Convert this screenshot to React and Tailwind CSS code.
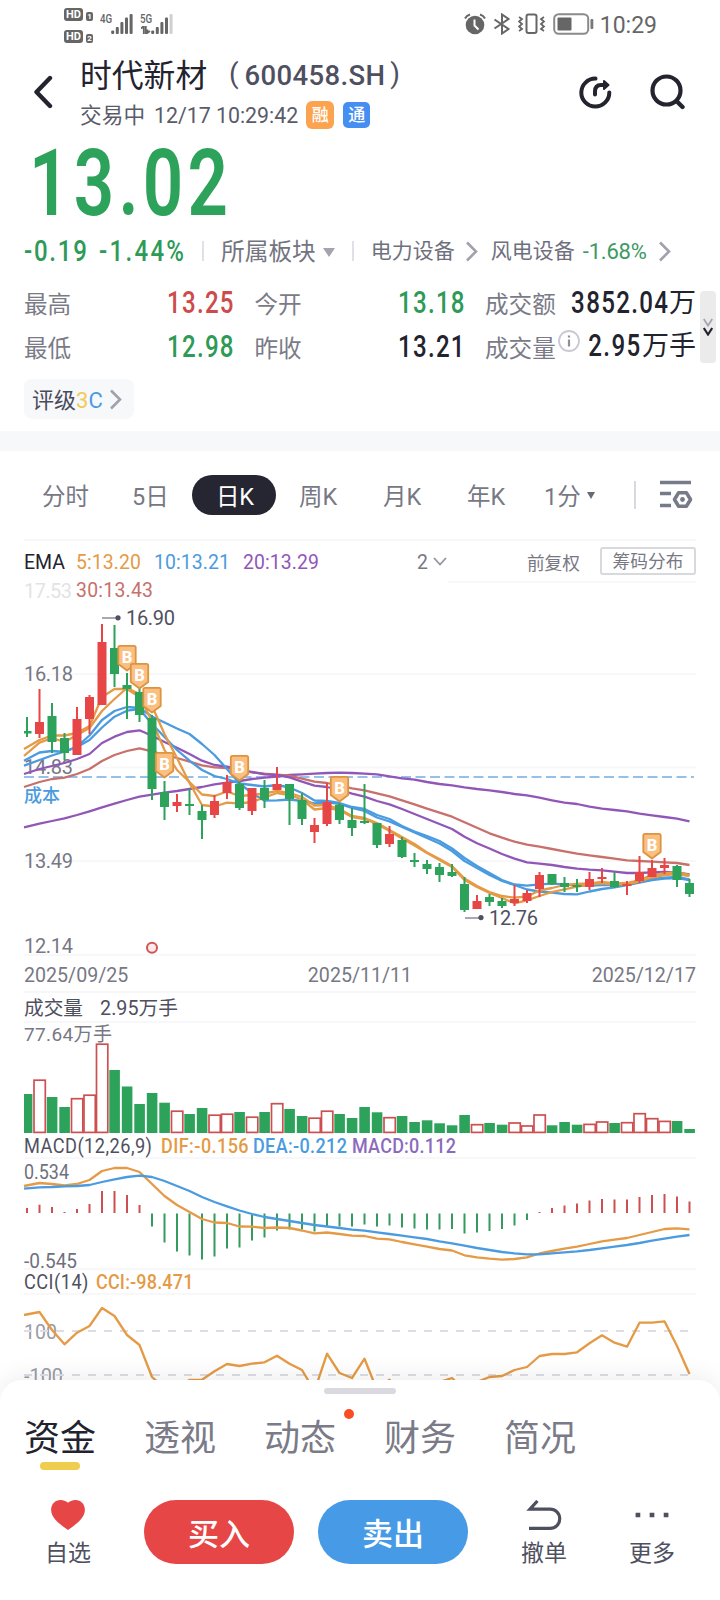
import React from "react";

const RED = "#e64646";
const GREEN = "#2da25b";
const ORANGE = "#e59a45";
const BLUE = "#4a9be0";
const PURPLE = "#9157b8";
const ROSE = "#c7706c";

const STEP = 12.5;
const candleX = (index) => 27 + index * STEP;

// [direction, body top, body bottom, wick top, wick bottom]
const candles = [
  ["g", 731, 733.5, 717, 737],
  ["r", 722, 734, 689, 738],
  ["g", 716, 742, 703, 753],
  ["g", 738, 753, 733, 760],
  ["r", 719, 755, 707, 755],
  ["r", 697, 719, 695, 734],
  ["r", 642, 705, 624, 705],
  ["g", 648, 674, 625, 687],
  ["g", 685, 689, 673, 719],
  ["g", 692, 715, 687, 722],
  ["g", 718, 789, 715, 800],
  ["g", 792, 807, 781, 820],
  ["r", 802, 806, 794, 812],
  ["g", 804, 806, 789, 815],
  ["g", 811, 820, 805, 839],
  ["r", 801, 815, 795, 818],
  ["r", 782, 793, 775, 799],
  ["g", 784, 808, 780, 810],
  ["r", 788, 811, 788, 815],
  ["g", 788, 800, 780, 808],
  ["r", 784, 790, 767, 790],
  ["g", 784, 799, 784, 825],
  ["g", 800, 819, 793, 825],
  ["r", 825, 832, 818, 843],
  ["r", 802, 824, 783, 826],
  ["g", 805, 820, 803, 824],
  ["g", 820, 828, 808, 836],
  ["g", 821, 823, 784, 824],
  ["g", 823, 845, 823, 848],
  ["r", 834, 844, 826, 847],
  ["g", 840, 857, 837, 858],
  ["g", 860, 862, 853, 867],
  ["g", 864, 869, 860, 874],
  ["g", 867, 875, 863, 882],
  ["g", 872, 876, 864, 877],
  ["g", 884, 910, 877, 912],
  ["r", 901, 909, 895, 909],
  ["g", 897, 902, 894, 906],
  ["g", 901, 906, 898, 908],
  ["r", 899, 903, 885, 906],
  ["r", 893, 901, 890, 903],
  ["r", 875, 889, 872, 897],
  ["g", 874, 884, 874, 885],
  ["g", 883, 887, 877, 892],
  ["g", 885, 887, 879, 892],
  ["r", 879, 887, 872, 890],
  ["r", 877, 879, 868, 883],
  ["g", 881, 887, 872, 888],
  ["r", 884, 886, 881, 895],
  ["r", 872, 881, 856, 883],
  ["r", 868, 877, 860, 877],
  ["r", 865, 868, 858, 874],
  ["g", 866, 880, 865, 887],
  ["g", 883, 894, 879, 897],
];

const averages = [
  {
    color: PURPLE,
    values: [827.3, 823.7, 821, 818.3, 815, 811.3, 807.3, 803.7, 800, 796.7, 794.7, 792.7, 791, 789, 787, 784.3, 782.7, 781, 779, 777.7, 776.5, 775, 774.3, 773.7, 773, 772.7, 773, 773.7, 774.3, 776.3, 778.3, 779.7, 782, 784, 785.3, 787.3, 789, 790.3, 792, 794, 795.3, 797.7, 800.3, 802.7, 804, 806.7, 808.7, 810, 811.3, 813.7, 815.3, 817, 818.7, 821.3],
  },
  {
    color: ROSE,
    values: [787, 782, 779, 777.7, 774, 769, 761, 755, 751, 748.3, 751.3, 755, 758, 761.7, 765.3, 767.3, 768, 770, 772.3, 773.7, 774.7, 775.7, 778.7, 781.7, 783, 785.7, 788.3, 790.3, 793.3, 796.3, 800.3, 804.3, 808.7, 812.7, 816.7, 822.3, 827.7, 833.3, 837.7, 841.7, 844.7, 846.7, 849, 851.3, 853.7, 855.3, 857, 858.7, 860.3, 861, 861.7, 862.3, 863, 865],
  },
  {
    color: PURPLE,
    values: [774, 769, 766, 763, 759, 754, 743, 736.7, 732, 730.3, 735.7, 742, 747.7, 754, 760.7, 765, 766.7, 769, 772, 774.3, 775, 777.3, 781.7, 785.7, 787, 790, 793.7, 796.7, 801, 804.3, 809, 814, 819, 824, 829, 836.7, 843.3, 848.5, 854, 858.7, 862.3, 863.7, 865, 867, 868.7, 869.7, 870.3, 871.7, 873, 873, 872.3, 872, 872.3, 874.3],
  },
  {
    color: BLUE,
    values: [760.7, 752.5, 751, 752, 746.5, 735.5, 720, 711, 707, 708, 716.5, 722.5, 728.5, 734, 744, 755, 769, 783.5, 793, 800.7, 800.3, 799.5, 801, 803.5, 802, 804, 808, 811, 817.5, 821.5, 827, 832.5, 838, 843.5, 851, 861, 868, 875, 881, 885, 889.5, 891.5, 892.7, 894, 894.3, 891.5, 889, 887.3, 885, 882.5, 880, 878.7, 878, 880],
  },
  {
    color: BLUE,
    values: [765.7, 760, 755.5, 751.5, 747, 740, 727.5, 716.7, 710.7, 709, 724, 737, 750, 760.7, 770, 776, 779, 783.5, 785, 786.5, 785, 787.5, 793, 800.5, 801, 803, 807, 809, 815, 819, 826, 831.5, 836, 841, 848.5, 858, 866, 873, 880, 884.5, 885.7, 884.3, 883.7, 884.3, 885.7, 885.5, 885, 885, 884, 881.5, 879, 877.7, 877, 879.5],
  },
  {
    color: ORANGE,
    values: [749, 740, 735.5, 735.5, 733, 726, 697, 689, 689, 697, 721, 750, 770, 782, 794.5, 796, 791.5, 796, 795, 793.5, 791, 793, 797, 805.5, 805, 809, 816, 818, 823, 830, 837, 844, 852.5, 859, 866, 878.5, 886, 892, 896, 897.7, 896.5, 890.5, 888, 885, 884, 883.5, 882, 883.5, 883, 880, 875, 873.5, 872, 875],
  },
  {
    color: ORANGE,
    values: [756, 742.7, 738, 742, 735, 728, 711, 699, 688, 694, 706, 734, 758, 783, 805, 806.5, 802.7, 803.5, 802, 797.5, 793, 795, 799.5, 809.5, 808, 810, 817, 819, 824, 831, 838.5, 845.5, 853, 860, 867, 880, 887, 893, 898, 903.3, 900.3, 896, 892, 889.3, 886.7, 884.3, 883.3, 884.5, 884, 881.5, 877.5, 875, 874, 876],
  },
];

const buyMarks = [
  [8, 671],
  [9, 689],
  [10, 713],
  [11, 778],
  [17, 781],
  [25, 802],
  [50, 859],
];

const volumeTops = [1094, 1079.5, 1097, 1107, 1098, 1094.5, 1043.5, 1070, 1086.5, 1104, 1093, 1102.7, 1110.5, 1114, 1108, 1114.5, 1113.5, 1112, 1116.5, 1112, 1103, 1109, 1116, 1117.5, 1110.5, 1114, 1118, 1107, 1112.3, 1117, 1116, 1122, 1120.3, 1123.3, 1125.3, 1115, 1124, 1123, 1124.7, 1122.3, 1125.3, 1114.3, 1125.3, 1122, 1124.7, 1123.7, 1121.3, 1123, 1122, 1113, 1118, 1120.7, 1121, 1129];

const macdBars = [5, 8.3, 6, 1, 4, 9, 22, 22, 18, 8, -13, -29, -38, -42, -46, -43, -35, -34, -27, -24, -17, -16, -16, -18, -13, -13, -13, -11, -13, -12, -14, -15, -16, -16, -15.5, -20, -19, -17.5, -15.5, -12, -6.5, 1, 5, 7.5, 9.5, 12.5, 14, 13.5, 13.5, 16, 18, 19, 16.5, 11.5];

const dif = [1186, 1183, 1184, 1185.5, 1184, 1180, 1171, 1168, 1168, 1172, 1184, 1196, 1205, 1212, 1219, 1222.5, 1223, 1226.5, 1226.7, 1228, 1227.5, 1228, 1230.5, 1233.3, 1232.5, 1234, 1235.7, 1236, 1238.7, 1239.3, 1242, 1244.3, 1246.7, 1249, 1250.5, 1255.3, 1257.3, 1258.7, 1259.7, 1259, 1257.3, 1253.5, 1251, 1248.7, 1246.7, 1244, 1241.3, 1239.7, 1238, 1235, 1232, 1229, 1228.3, 1229.3];

const dea = [1188.7, 1187.3, 1187, 1186.3, 1186, 1185, 1182, 1179.3, 1177, 1175.7, 1177, 1181, 1186, 1191, 1197, 1202, 1206.3, 1210.5, 1214, 1217, 1219, 1221, 1223, 1225, 1226.5, 1228, 1229.7, 1230.7, 1232.3, 1234, 1235.7, 1237.3, 1239, 1241.3, 1243.3, 1245.7, 1248, 1250, 1252, 1253.3, 1254.3, 1254.3, 1253.3, 1252.3, 1251.3, 1250, 1248.3, 1246.7, 1245, 1243, 1240.7, 1238.7, 1236.7, 1235];

const cci = [1315, 1312, 1330, 1344.3, 1332.7, 1326, 1308, 1316, 1335, 1345, 1377, 1388, 1386, 1380, 1379.7, 1371.3, 1364, 1366, 1363.7, 1362.3, 1355.7, 1363.7, 1370, 1391, 1353.7, 1373, 1378, 1358.7, 1390, 1379.7, 1392, 1392, 1390, 1382, 1378, 1390, 1382, 1377, 1376, 1370, 1367, 1356, 1354, 1354, 1352.3, 1343.3, 1335.3, 1342.7, 1346.7, 1322.7, 1322.7, 1321.3, 1346, 1374];

const toPoints = (values) =>
  values
    .map((value, index) => `${index === 0 ? 24 : candleX(index)},${value}`)
    .join(" ");

function Line({ values, color, width = 2.3 }) {
  return (
    <polyline
      points={toPoints(values)}
      fill="none"
      stroke={color}
      strokeWidth={width}
      strokeLinejoin="round"
    />
  );
}

function GridLine({ y, from = 24 }) {
  return <rect x={from} y={y - 1} width={696 - from} height="2" fill="#f8f8fa" />;
}

// Narrow figures: the outer span keeps the drawn width in the flow.
function Num({ children, box, scale = "scale-x-[0.82]", right = false, className = "" }) {
  return (
    <span
      className={`flex shrink-0 whitespace-nowrap ${box} ${
        right ? "justify-end" : "justify-start"
      } ${className}`}
    >
      <span className={`shrink-0 ${right ? "origin-right" : "origin-left"} ${scale}`}>
        {children}
      </span>
    </span>
  );
}

function Chevron({ className = "" }) {
  return (
    <svg viewBox="0 0 13 21" className={`h-[21px] w-[13px] shrink-0 ${className}`}>
      <path d="M2 1.5l9 9-9 9" fill="none" stroke="#a0a1ad" strokeWidth="2.6" />
    </svg>
  );
}

function HdBadge({ label }) {
  return (
    <div className="flex h-[13px] items-end gap-[3px]">
      <span className="flex h-[13px] w-[19px] items-center justify-center rounded-[3px] bg-[#666] text-[11px] leading-none font-bold text-white">
        HD
      </span>
      <span className="flex h-[9px] w-[7px] items-center justify-center rounded-[2px] bg-[#666] text-[8px] leading-none font-bold text-white">
        {label}
      </span>
    </div>
  );
}

function Signal({ label, weak = false, className = "" }) {
  return (
    <div className={`flex h-[22px] ${className}`}>
      <div className="h-full w-[11px]">
        <Num box="w-[11px]" scale="scale-x-[0.75]" className="text-[13px] leading-[11px] font-medium">
          {label}
        </Num>
        {weak && (
          <svg viewBox="0 0 10 8" className="mt-[2px] ml-px h-[8px] w-[10px]">
            <path d="M0 2.5L2.8 0V8M4.8 0V8L9 5M6.5 3.5v3" fill="none" stroke="#666" strokeWidth="1.8" />
          </svg>
        )}
      </div>
      <svg viewBox="0 0 22 22" className="h-[22px] w-[22px]">
        {[17.5, 14, 9, 4.5, 1].map((top, index) => (
          <rect
            key={top}
            x={0.2 + index * 4.6}
            y={top}
            width="3"
            height={21 - top}
            rx="1"
            fill={weak && index === 4 ? "#d0d0d0" : "#666"}
          />
        ))}
      </svg>
    </div>
  );
}

function StatusBar() {
  return (
    <div className="flex h-12 items-start pt-2 pr-[63px] pl-16 text-[#666]">
      <div className="flex flex-col gap-[9px]">
        <HdBadge label="1" />
        <HdBadge label="2" />
      </div>
      <Signal label="4G" className="mt-[5px] ml-[7px]" />
      <Signal label="5G" weak className="mt-[5px] ml-[7px]" />

      <div className="mt-[5px] ml-auto flex h-[22px] items-center">
        <svg viewBox="0 0 22 22" className="h-[22px] w-[22px]">
          <circle cx="11" cy="12" r="9.3" fill="#666" />
          <path d="M1 5.5Q2.500 2.500 6 1.500M21 5.500Q19.500 2.500 16 1.500" fill="none" stroke="#666" strokeWidth="2" />
          <path d="M10.500 6.500v6l4 4" fill="none" stroke="#fff" strokeWidth="2" />
        </svg>
        <svg viewBox="0 0 18 22" className="ml-[7px] h-[22px] w-[18px]">
          <path d="M1.500 6.500l14 9.500-6.500 4.500V1.500l6.500 4.500-14 9.500" fill="none" stroke="#666" strokeWidth="2" />
        </svg>
        <svg viewBox="0 0 27 22" className="ml-[7px] h-[22px] w-[27px]">
          <rect x="8.500" y="1.500" width="10" height="18.500" rx="2" fill="none" stroke="#666" strokeWidth="2" />
          <path d="M1 4l3 2-3 2.500 3 2.500-3 2.500 3 2.500-3 2M26 4l-3 2 3 2.500-3 2.500 3 2.500-3 2.500 3 2" fill="none" stroke="#666" strokeWidth="1.800" />
        </svg>
        <svg viewBox="0 0 41 22" className="ml-[8px] h-[22px] w-[41px]">
          <rect x="1.200" y="1.200" width="34" height="19.600" rx="4.500" fill="none" stroke="#8a8a8a" strokeWidth="2" />
          <rect x="4.500" y="4.500" width="14" height="13" rx="1" fill="#666" />
          <rect x="37.500" y="6" width="2.800" height="10" rx="1" fill="#777" />
        </svg>
        <span className="mt-[3px] ml-[6px] text-[23px] leading-[22px]">10:29</span>
      </div>
    </div>
  );
}

function Header() {
  return (
    <div className="flex h-[90px] px-[34px]">
      <svg viewBox="0 0 20 34" className="mt-[27px] h-[34px] w-5">
        <path d="M16 3L2.500 17l13.500 14" fill="none" stroke="#23242f" strokeWidth="4.400" strokeLinecap="round" strokeLinejoin="round" />
      </svg>
      <div className="ml-[26px]">
        <div className="mt-[8px] flex h-10 items-center whitespace-nowrap">
          <span className="w-[127px] text-[31.800px] leading-10 text-[#22232e]">时代新材</span>
          <span className="ml-[22px] flex items-center text-[27.500px] leading-10 font-medium text-[#4f505f]">
            <span className="mb-1 text-[28px] font-normal">(</span>
            <span className="ml-[6px] tracking-[0.350px]">600458.SH</span>
            <span className="mb-1 ml-[5px] text-[28px] font-normal">)</span>
          </span>
        </div>
        <div className="mt-[5px] flex h-[30px] items-center text-[21.700px] leading-[30px] text-[#5a5b6a]">
          <span>交易中</span>
          <span className="ml-[9px] text-[21.300px]">12/17 10:29:42</span>
          <span className="mb-[2px] ml-[8px] flex h-7 w-7 items-center justify-center rounded-[6px] bg-[#fca34f] text-[17px] font-medium text-white">
            融
          </span>
          <span className="mb-[2px] ml-[9px] flex h-[26px] w-[27px] items-center justify-center rounded-[5px] bg-[#458ef2] text-[17px] font-medium text-white">
            通
          </span>
        </div>
      </div>
      <svg viewBox="0 0 34 34" className="mt-[28px] ml-auto h-[34px] w-[34px]">
        <path d="M16.500 2.600A14 14 0 1 0 30.300 16.500" fill="none" stroke="#23242f" strokeWidth="4" strokeLinecap="round" />
        <path d="M16 18.500v-3q0-6.500 6-6.500h3.500" fill="none" stroke="#23242f" strokeWidth="4" strokeLinecap="round" />
        <path d="M25 5l4.500 4-4.500 4z" fill="#23242f" stroke="#23242f" strokeWidth="2" strokeLinejoin="round" />
      </svg>
      <svg viewBox="0 0 36 36" className="mt-[26px] ml-[37px] h-9 w-9">
        <circle cx="16.500" cy="16.500" r="14" fill="none" stroke="#23242f" strokeWidth="4.200" />
        <path d="M27 27.500l5.500 5.500" stroke="#23242f" strokeWidth="4.400" strokeLinecap="round" />
      </svg>
    </div>
  );
}

function Stat({ label, value, color }) {
  return (
    <div className="flex items-center justify-between">
      <span className="mt-[4px]">{label}</span>
      <Num box="w-[66px]" scale="scale-x-[0.79]" right className={`mb-[3px] text-[30.500px] font-medium tracking-[1.600px] ${color}`}>
        {value}
      </Num>
    </div>
  );
}

function Quote() {
  return (
    <div className="flex h-[293px] flex-col">
      <Num
        box="w-[206px]"
        scale="scale-x-[0.77]"
        className="ml-[29px] h-[92px] text-[92px] leading-[92px] font-semibold tracking-[5.500px] text-[#2da25b]"
      >
        13.02
      </Num>

      <div className="mt-[4px] flex h-[34px] items-center pl-6 text-[#6f707e]">
        <Num box="w-[65px]" scale="scale-x-[0.80]" className="text-[30px] leading-[30px] font-medium tracking-[2.200px] text-[#2d9a58]">
          -0.19
        </Num>
        <Num box="w-[87px]" scale="scale-x-[0.80]" className="ml-[10px] text-[30px] leading-[30px] font-medium tracking-[2.900px] text-[#2d9a58]">
          -1.44%
        </Num>
        <span className="ml-4 h-5 w-[2px] bg-[#e0e1e8]" />
        <span className="mt-[2px] ml-[17px] text-[23.700px] leading-[34px] text-[#73747f]">所属板块</span>
        <svg viewBox="0 0 12 9" className="mt-[2px] ml-[7px] h-[9px] w-3">
          <path d="M0 0h12L6 9z" fill="#a3a4b0" />
        </svg>
        <span className="ml-[17px] h-5 w-[2px] bg-[#e0e1e8]" />
        <span className="mt-[2px] ml-[17px] text-[21px]">电力设备</span>
        <Chevron className="ml-[10px]" />
        <span className="mt-[2px] ml-[13px] text-[21px]">风电设备</span>
        <span className="mt-px ml-[8px] w-[66px] text-[22px] tracking-[-0.200px] text-[#3d9a61]">-1.68%</span>
        <Chevron className="ml-[9px]" />
      </div>

      <div className="relative mt-[14px]">
        <div className="grid h-[88px] grid-cols-[211px_211px_211px] grid-rows-2 gap-x-[19.500px] pl-6 text-[23.600px] text-[#7a7b87]">
          <Stat label="最高" value="13.25" color="text-[#cd4b4b]" />
          <Stat label="今开" value="13.18" color="text-[#2d9a58]" />
          <div className="flex items-center justify-between">
            <span className="mt-[4px]">成交额</span>
            <span className="flex items-center text-[#22232e]">
              <Num box="w-[98px]" scale="scale-x-[0.79]" right className="mb-[3px] text-[30.500px] font-medium tracking-[1.700px]">
                3852.04
              </Num>
              <span className="mb-[2px] text-[27px]">万</span>
            </span>
          </div>
          <Stat label="最低" value="12.98" color="text-[#2d9a58]" />
          <Stat label="昨收" value="13.21" color="text-[#22232e]" />
          <div className="flex items-center">
            <span className="mt-[4px]">成交量</span>
            <svg viewBox="0 0 22 22" className="mb-[14px] ml-[2px] h-[22px] w-[22px]">
              <circle cx="11" cy="11" r="10" fill="none" stroke="#c9cad3" strokeWidth="1.800" />
              <path d="M11 9.500v7M11 5.500v2" stroke="#8d8e9a" strokeWidth="2.200" />
            </svg>
            <span className="ml-auto flex items-center text-[#22232e]">
              <Num box="w-[53px]" scale="scale-x-[0.79]" right className="mb-[5px] text-[30.500px] font-medium tracking-[1.800px]">
                2.95
              </Num>
              <span className="mb-[4px] text-[27px]">万手</span>
            </span>
          </div>
        </div>
        <div className="absolute top-[9px] right-1 flex h-[72px] w-4 flex-col items-center justify-center rounded bg-[#ebebec]">
          <svg viewBox="0 0 10 18" className="h-[18px] w-[10px]">
            <path d="M.8 1L5 7.500 9.200 1" fill="none" stroke="#a5a6b0" strokeWidth="1.800" />
            <path d="M.8 10L5 16.500 9.200 10" fill="none" stroke="#22232e" strokeWidth="2.200" />
          </svg>
        </div>
      </div>

      <div className="mt-[9px] ml-6 flex h-10 w-[110px] items-center rounded-lg bg-[#f6f8fa] pl-2 text-[22px] text-[#4a4b5a]">
        <span className="mt-[3px]">评级</span>
        <span className="mt-[3px] text-[#f1cb55]">3</span>
        <span className="mt-[3px] text-[#4a9be0]">C</span>
        <Chevron className="ml-[6px]" />
      </div>
    </div>
  );
}

function PeriodTabs() {
  return (
    <div className="flex h-[88px] items-center pl-[42px] text-[23.500px] leading-10 text-[#777884]">
      <span className="mt-[4px] w-[48px]">分时</span>
      <span className="mt-[4px] ml-[42px] w-[34px] whitespace-nowrap">5日</span>
      <span className="ml-[26px] flex h-10 w-[84px] items-center justify-center rounded-full bg-[#252632] pt-[4px] pl-[2px] text-white">
        日K
      </span>
      <span className="mt-[4px] ml-[23px] w-[40px]">周K</span>
      <span className="mt-[4px] ml-[44px] w-[40px]">月K</span>
      <span className="mt-[4px] ml-[44px] w-[40px]">年K</span>
      <span className="mt-[4px] ml-[37px] w-[36px] whitespace-nowrap">1分</span>
      <svg viewBox="0 0 8 7" className="ml-[7px] h-[7px] w-2">
        <path d="M0 0h8L4 7z" fill="#686976" />
      </svg>
      <span className="ml-[39px] h-7 w-[2px] bg-[#d8d9de]" />
      <svg viewBox="0 0 34 30" className="mb-[2px] ml-[23px] h-[30px] w-[34px]">
        <path d="M1 3.500h31M1 14.500h11M1 26.500h11" stroke="#777b89" strokeWidth="3.400" />
        <path d="M19.500 13.800h8l4 6.700-4 6.700h-8l-4-6.700z" fill="none" stroke="#777b89" strokeWidth="3.600" strokeLinejoin="round" />
        <circle cx="23.500" cy="20.500" r="2.400" fill="#777b89" />
      </svg>
    </div>
  );
}

function EmaRow() {
  return (
    <div className="mx-6 flex h-[43px] items-center border-t-2 border-[#f7f7f9] pt-[2px] text-[19.400px] leading-[30px] text-[#777884]">
      <span className="w-[52px] text-[19.500px] text-[#22232e]">EMA</span>
      <span className="w-[78px] tracking-[0.100px] text-[#e59a45]">5:13.20</span>
      <span className="w-[89px] tracking-[0.100px] text-[#4a9be0]">10:13.21</span>
      <span className="w-[90px] tracking-[0.100px] text-[#9157b8]">20:13.29</span>
      <span className="ml-[84px]">2</span>
      <svg viewBox="0 0 14 9" className="mb-[2px] ml-[5px] h-[9px] w-[14px]">
        <path d="M1 1l6 6.500L13 1" fill="none" stroke="#92939e" strokeWidth="1.800" />
      </svg>
      <span className="mt-[2px] ml-auto text-[17.700px]">前复权</span>
      <span className="mb-[4px] ml-[20px] flex h-[28px] w-[96px] items-center justify-center rounded-[3px] border-2 border-[#d8d9dd] pt-[3px] text-[17.700px]">
        筹码分布
      </span>
    </div>
  );
}

function BuyMark({ x, tip }) {
  return (
    <g transform={`translate(${x} ${tip})`}>
      <path
        d="M-8.700 -23.500q0-1.700 1.700-1.700h14q1.700 0 1.700 1.700v16.500L0 -.5l-8.700-6.500z"
        fill="#fbbf82"
        stroke="#dd9440"
        strokeWidth="1.800"
        strokeLinejoin="round"
      />
      <text y="-8.500" textAnchor="middle" fontSize="16.500" fontWeight="800" fill="#fff">
        B
      </text>
    </g>
  );
}

function PriceChart() {
  return (
    <svg viewBox="0 582 720 374" className="block h-[374px] w-[720px] overflow-visible" fontSize="20" fill="#777884">
      <GridLine y={582} from={448} />
      <GridLine y={674} />
      <GridLine y={767.5} />
      <GridLine y={861} />
      <GridLine y={955} />
      <text x="24" y="598" textLength="48" fill="#e3e3e7">17.53</text>
      <text x="76" y="597" textLength="77" fill={ROSE} fontSize="19.400">30:13.43</text>
      <text x="24" y="681" textLength="49">16.18</text>
      <text x="24" y="774" textLength="49">14.83</text>
      <text x="24" y="867.500" textLength="49">13.49</text>
      <text x="24" y="953" textLength="49">12.14</text>
      <path d="M24 777H694" stroke="#95c0ea" strokeWidth="2" strokeDasharray="10 4.500" />

      {averages.map(({ color, values }, index) => (
        <Line key={index} values={values} color={color} />
      ))}
      {candles.map(([direction, top, bottom, wickTop, wickBottom], index) => {
        const x = candleX(index);
        const left = Math.max(24, x - 4.5);

        return (
          <g key={x} fill={direction === "g" ? GREEN : RED}>
            <rect x={x - 1} y={wickTop} width="2" height={wickBottom - wickTop} />
            <rect x={left} y={top} width={x + 4.5 - left} height={bottom - top} />
          </g>
        );
      })}
      {buyMarks.map(([index, tip]) => (
        <BuyMark key={index} x={candleX(index)} tip={tip} />
      ))}

      <text x="24" y="802" fontSize="18" fontWeight="500" fill={BLUE}>成本</text>
      <path d="M102 618H118M465 918H481" stroke="#8b8c97" strokeWidth="1.500" />
      <circle cx="118" cy="617.800" r="2.600" fill="#4f505f" />
      <circle cx="481" cy="917.600" r="2.600" fill="#4f505f" />
      <text x="126" y="625" textLength="49" fill="#4f505f">16.90</text>
      <text x="489" y="925" textLength="49" fill="#4f505f">12.76</text>
      <circle cx="152" cy="947.700" r="5" fill="#fde9e7" stroke="#cd5555" strokeWidth="2" />
    </svg>
  );
}

function VolumeChart() {
  return (
    <svg viewBox="0 1021 720 113" className="block h-[113px] w-[720px] overflow-visible">
      <GridLine y={1022} />
      <text x="24" y="1041" fontSize="19" fill="#777884" textLength="88">77.64万手</text>
      {volumeTops.map((top, index) => {
        const x = candleX(index);

        if (candles[index][0] === "r") {
          return (
            <rect
              key={x}
              x={x - 5.5}
              y={top + 0.7}
              width="11.300"
              height={1131.7 - top}
              fill="#fff"
              stroke="#cd5050"
              strokeWidth="1.700"
            />
          );
        }

        const left = Math.max(24, x - 5.2);
        return <rect key={x} x={left} y={top} width={x + 5.4 - left} height={1133 - top} fill={GREEN} />;
      })}
    </svg>
  );
}

function MacdChart() {
  return (
    <svg viewBox="0 1157 720 113" className="block h-[113px] w-[720px] overflow-visible">
      <GridLine y={1158} />
      <GridLine y={1269} />
      {macdBars.map((value, index) => (
        <rect
          key={index}
          x={candleX(index) - 1}
          y={value > 0 ? 1213 - value : 1213.5}
          width="2"
          height={Math.abs(value)}
          fill={value > 0 ? "#cd5050" : "#349a5f"}
        />
      ))}
      <Line values={dif} color={ORANGE} />
      <Line values={dea} color={BLUE} />
      <g fontSize="20" fill="#6f707e">
        <text x="24" y="1179" textLength="45" lengthAdjust="spacingAndGlyphs">0.534</text>
        <text x="24" y="1268" textLength="53" lengthAdjust="spacingAndGlyphs">-0.545</text>
      </g>
    </svg>
  );
}

function CciChart() {
  return (
    <svg viewBox="0 1293 720 87" className="block h-[87px] w-[720px] overflow-hidden">
      <GridLine y={1294} />
      <text x="24" y="1339" fontSize="20" fill="#9a9ba6" textLength="33" lengthAdjust="spacingAndGlyphs">100</text>
      <text x="24" y="1383" fontSize="20" fill="#9a9ba6" textLength="39" lengthAdjust="spacingAndGlyphs">-100</text>
      <path d="M24 1331H690M24 1375H690" stroke="#dcdde6" strokeWidth="1.800" strokeDasharray="8 8" />
      <Line values={cci} color={ORANGE} />
    </svg>
  );
}

const sheetTabs = ["资金", "透视", "动态", "财务", "简况"];

function BottomSheet() {
  return (
    <div className="relative flex h-[220px] flex-col items-center rounded-t-[22px] bg-white shadow-[0_-4px_24px_rgba(0,0,0,0.07)]">
      <span className="mt-2 h-[6px] w-[72px] rounded-full bg-[#d9d9df]" />
      <div className="mt-[20px] flex h-[63px] w-full gap-[48px] pl-6">
        {sheetTabs.map((tab, index) => (
          <div key={tab} className="relative flex w-[72px] flex-col items-center">
            <span
              className={`text-[36px] leading-[50px] whitespace-nowrap ${
                index === 0 ? "text-[#22232e]" : "text-[#7a7b87]"
              }`}
            >
              {tab}
            </span>
            {index === 0 && <span className="-mt-[2px] h-2 w-10 rounded-full bg-[#f1cd4d]" />}
            {tab === "动态" && (
              <span className="absolute top-[-5px] -right-[18px] h-[10px] w-[10px] rounded-full bg-[#f94d23]" />
            )}
          </div>
        ))}
      </div>
      <div className="mt-[23px] flex h-[70px] w-full text-[23px] text-[#4f505f]">
        <div className="ml-[42px] flex w-[52px] flex-col items-center">
          <svg viewBox="0 0 36 32" className="h-8 w-9">
            <path d="M18 32C8 25 0 19 0 10.500 0 4 4.500 0 10 0c3.500 0 6.500 1.500 8 3C19.500 1.500 22.500 0 26 0c5.500 0 10 4 10 10.500C36 19 28 25 18 32z" fill={RED} />
          </svg>
          <span className="mt-[8px] leading-8">自选</span>
        </div>
        <button type="button" className="ml-[50px] h-16 w-[150px] rounded-full bg-[#e64646] pt-[6px] text-[31px] leading-[56px] font-medium text-white">
          买入
        </button>
        <button type="button" className="ml-6 h-16 w-[150px] rounded-full bg-[#469ae6] pt-[6px] text-[31px] leading-[56px] font-medium text-white">
          卖出
        </button>
        <div className="ml-[50px] flex w-[52px] flex-col items-center">
          <svg viewBox="0 0 36 32" className="h-8 w-9">
            <path d="M11 1L3 9.700h21.500a10 10 0 0 1 0 20.600H2" fill="none" stroke="#4f505f" strokeWidth="3.400" />
          </svg>
          <span className="mt-[8px] leading-8">撤单</span>
        </div>
        <div className="ml-[56px] flex w-[52px] flex-col items-center">
          <svg viewBox="0 0 36 32" className="h-8 w-9">
            <path d="M.5 13.500h5v5h-5zM15.500 13.500h5v5h-5zM30.500 13.500h5v5h-5z" fill="#4f505f" />
          </svg>
          <span className="mt-[8px] leading-8">更多</span>
        </div>
      </div>
    </div>
  );
}

function App() {
  return (
    <div className="h-[1600px] w-[720px] overflow-hidden bg-white [font-family:Roboto,'Noto_Sans_CJK_SC',sans-serif]">
      <StatusBar />
      <Header />
      <Quote />
      <div className="h-5 bg-[#f7f8fa]" />
      <PeriodTabs />
      <EmaRow />
      <PriceChart />

      <div className="flex h-[35px] items-center justify-between px-6 pt-[5px] text-[19.600px] text-[#777884]">
        <span>2025/09/25</span>
        <span>2025/11/11</span>
        <span>2025/12/17</span>
      </div>
      <div className="mx-6 flex h-[30px] items-center border-t-2 border-[#f7f7f9] pt-[4px] text-[19.700px] leading-[24px] text-[#4f505f]">
        <span>成交量</span>
        <span className="ml-[17px]">2.95万手</span>
      </div>
      <VolumeChart />

      <div className="flex h-[23px] items-center pt-[2px] pl-6 text-[20px] leading-[21px] text-[#4f505f]">
        <Num box="w-[137px]" scale="scale-x-[0.91]" className="tracking-[0.500px]">MACD(12,26,9)</Num>
        <Num box="w-[92px]" scale="scale-x-[0.90]" className="font-medium tracking-[0.500px] text-[#e59a45]">DIF:-0.156</Num>
        <Num box="w-[99px]" scale="scale-x-[0.90]" className="font-medium tracking-[0.400px] text-[#4a9be0]">DEA:-0.212</Num>
        <Num box="w-[110px]" scale="scale-x-[0.90]" className="font-medium tracking-[0.250px] text-[#8c6bbd]">MACD:0.112</Num>
      </div>
      <MacdChart />
      <div className="flex h-[23px] items-center pt-[2px] pl-6 text-[20px] leading-[21px] text-[#4f505f]">
        <Num box="w-[72px]" scale="scale-x-[0.91]" className="tracking-[0.500px]">CCI(14)</Num>
        <Num box="w-[110px]" scale="scale-x-[0.90]" className="font-medium tracking-[0.200px] text-[#e59a45]">CCI:-98.471</Num>
      </div>
      <CciChart />
      <BottomSheet />
    </div>
  );
}

export default App;
